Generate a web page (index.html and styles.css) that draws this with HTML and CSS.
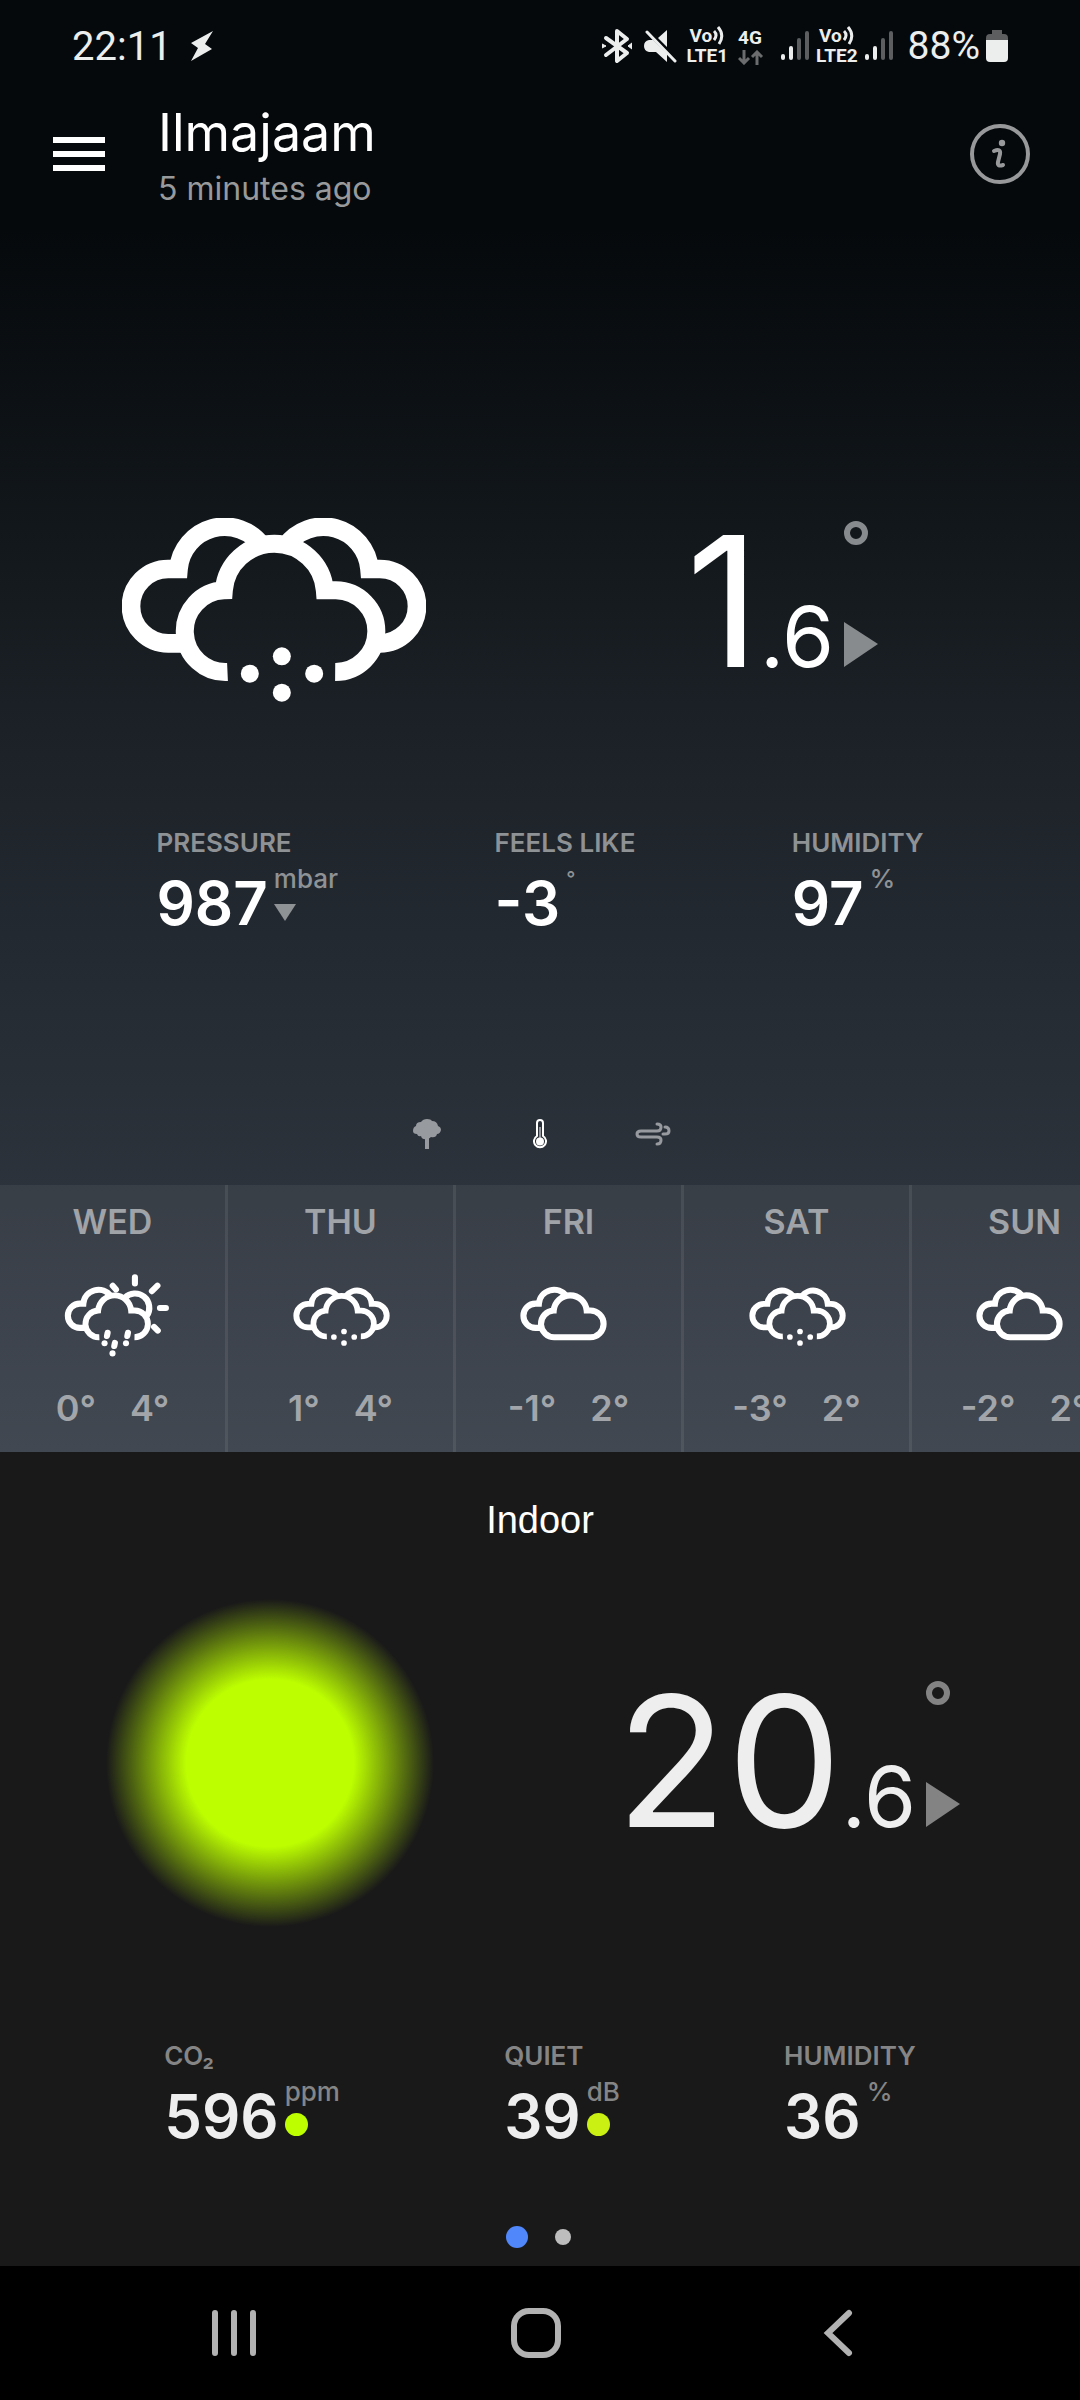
FILE: index.html
```html
<!DOCTYPE html>
<html lang="en">
<head>
<meta charset="utf-8">
<meta name="viewport" content="width=device-width, initial-scale=1">
<title>Ilmajaam</title>
<link rel="stylesheet" href="styles.css">
</head>
<body>
<svg class="defs" aria-hidden="true">
  <defs>
    <g id="back-left" fill="none" stroke="currentColor" stroke-width="56">
      <path d="M312 489H265A111.500 111.500 0 0 1 265 266H296A139 139 0 0 1 548 198"/>
    </g>
    <g id="back-right" fill="none" stroke="currentColor" stroke-width="56">
      <path d="M617 198A139 139 0 0 1 869 266H900A111.500 111.500 0 0 1 900 489"/>
    </g>
    <path id="front-open" fill="none" stroke="currentColor" stroke-width="54" d="M443 575A122.500 122.500 0 0 1 432 330A152 152 0 0 1 735 330H768A122.500 122.500 0 0 1 766 575"/>
    <path id="front-closed" fill="none" stroke="currentColor" stroke-width="56" d="M443 575A122.500 122.500 0 0 1 432 330A152 152 0 0 1 735 330H768A122.500 122.500 0 0 1 768 575Z"/>
    <g id="snow-cloud">
      <use href="#back-left"/><use href="#back-right"/><use href="#front-open"/>
      <g fill="currentColor"><circle cx="606" cy="528" r="27"/><circle cx="510" cy="580" r="27"/><circle cx="703" cy="580" r="27"/><circle cx="606" cy="637" r="27"/></g>
    </g>
  </defs>
</svg>

<div class="statusbar">
  <span class="clock">22:11</span>
  <svg class="bolt" width="24" height="32" viewBox="0 0 24 32"><path fill="#eceeee" d="M23 1L1 13L8 18L1 31L22 19L15 14Z"/></svg>
  <div class="status-icons">
    <svg width="30" height="36" viewBox="0 0 30 36" fill="none" stroke="#eceeee" stroke-width="4" stroke-linejoin="round" stroke-linecap="round"><path d="M4 10L25 25L15 33V3L25 11L4 27"/><path d="M0 16L4 18L0 20ZM30 15L26 18L30 21Z" fill="#eceeee" stroke-width="1"/></svg>
    <svg class="mute" width="33" height="34" viewBox="0 0 33 34"><path fill="#eceeee" d="M23 1V18L14 9ZM5 11H9L23 25V33L12 23H5Q0 22 0 17Q0 12 5 11Z"/><path stroke="#eceeee" stroke-width="3" stroke-linecap="round" d="M3 3L31 32"/></svg>
    <span class="volte"><span class="volte-top">Vo<svg width="11" height="19" viewBox="0 0 11 19" fill="none" stroke="#eceeee" stroke-width="3"><path d="M1 5Q5 9 1 14M5 1Q12 9 6 18"/></svg></span><span>LTE1</span></span>
    <span class="network"><span>4G</span><svg width="26" height="15" viewBox="0 0 26 15" fill="none" stroke="#6a6c6d" stroke-width="3"><path d="M6 0V13M1 8L6 13L11 8M19 15V2M14 7L19 2L24 7"/></svg></span>
    <svg class="signal" width="28" height="30" viewBox="0 0 28 30" stroke-width="4" stroke-linecap="round"><path stroke="#eceeee" d="M2 25V27M10 17V27"/><path stroke="#5c5e5f" d="M18 9V27M26 2V27"/></svg>
    <span class="volte volte-2"><span class="volte-top">Vo<svg width="11" height="19" viewBox="0 0 11 19" fill="none" stroke="#eceeee" stroke-width="3"><path d="M1 5Q5 9 1 14M5 1Q12 9 6 18"/></svg></span><span>LTE2</span></span>
    <svg class="signal-2" width="28" height="30" viewBox="0 0 28 30" stroke-width="4" stroke-linecap="round"><path stroke="#eceeee" d="M2 25V27M10 17V27"/><path stroke="#5c5e5f" d="M18 9V27M26 2V27"/></svg>
    <span class="battery-level">88%</span>
    <svg width="22" height="32" viewBox="0 0 22 32"><path fill="#5c5e5f" d="M6 0H16V4H18Q22 4 22 8V10H0V8Q0 4 4 4H6Z"/><path fill="#eceeee" d="M0 10H22V28Q22 32 18 32H4Q0 32 0 28Z"/></svg>
  </div>
</div>

<main>
<section class="outdoor">
  <header class="topbar">
    <button class="menu" aria-label="Menu"><svg width="52" height="34" viewBox="0 0 52 34" fill="#fff"><path d="M0 0H52V6H0ZM0 14H52V20H0ZM0 28H52V34H0Z"/></svg></button>
    <div class="station">
      <h1>Ilmajaam</h1>
      <p>5 minutes ago</p>
    </div>
    <button class="info" aria-label="Information"><svg width="60" height="60" viewBox="0 0 60 60" fill="none" stroke="#98999b" stroke-width="4"><circle cx="30" cy="30" r="28"/><circle cx="32" cy="19" r="3.200" fill="#98999b" stroke="none"/><path stroke-linecap="round" d="M24 27Q31 24 30 30L28 38Q27 43 33 41"/></svg></button>
  </header>

  <div class="hero">
    <svg class="now-icon" width="304" height="184" viewBox="127 113 911 552"><use href="#snow-cloud"/></svg>
    <div class="temp">
      <span class="whole">1</span><span class="fraction">.6</span>
      <span class="trend"><span class="ring"></span><svg width="34" height="45" viewBox="0 0 34 45"><path fill="currentColor" d="M0 0L34 22L0 45Z"/></svg></span>
    </div>
  </div>

  <dl class="metrics">
    <div><dt>PRESSURE</dt><dd><span class="value">987</span><span class="unit">mbar<svg class="down" width="22" height="17" viewBox="0 0 22 17"><path fill="currentColor" d="M0 0H22L11 17Z"/></svg></span></dd></div>
    <div><dt>FEELS LIKE</dt><dd><span class="value">-3</span><span class="unit degree">°</span></dd></div>
    <div><dt>HUMIDITY</dt><dd><span class="value">97</span><span class="unit">%</span></dd></div>
  </dl>

  <nav class="modules" aria-label="Modules">
    <button aria-label="Outdoor"><svg width="28" height="30" viewBox="0 0 28 30" fill="#979a9f"><path d="M3 7Q3 3 8 3Q10 0 14 0Q18 0 19 2Q24 2 25 7Q28 8 28 11Q27 15 24 15Q23 19 18 18Q16 20 14 20Q9 21 8 17Q5 18 4 15Q0 15 0 12Q0 8 3 7Z"/><path d="M12 18H16V30H12Z"/></svg></button>
    <button aria-label="Temperature"><svg width="14" height="30" viewBox="0 0 14 30" fill="none" stroke="#fff" stroke-width="2"><path d="M4 17V4A3 3 0 0 1 10 4V17A6 6 0 1 1 4 17Z"/><circle cx="7" cy="22.500" r="3" fill="#fff"/><path d="M7 8V22" stroke-width="1"/></svg></button>
    <button aria-label="Wind"><svg width="36" height="24" viewBox="0 0 36 24" fill="none" stroke="#979a9f" stroke-width="3" stroke-linecap="round"><path d="M22 2Q26 2 26 5Q26 9 22 9H6Q2 9 2 12Q2 15 6 15H22Q26 15 26 18Q26 22 22 22"/><path d="M30 5Q34 5 34 9Q34 12 30 12H28"/></svg></button>
  </nav>

  <ol class="forecast">
    <li><h2>WED</h2>
      <svg width="112" height="83" viewBox="54 -6 1029 763"><use href="#back-left"/><use href="#front-open"/>
        <g fill="none" stroke="currentColor" stroke-width="56"><path d="M677 213A131 131 0 0 1 880 377"/><path stroke-linecap="round" d="M770 24V82M566 102L596 136M977 101L926 152M1000 306H1055M946 480L980 514M519 535L513 564M706 535L700 564M586 627L580 656"/></g>
        <g fill="currentColor"><circle cx="491" cy="631" r="28"/><circle cx="688" cy="631" r="28"/><circle cx="564" cy="724" r="28"/></g></svg>
      <p><span>0°</span><span>4°</span></p></li>
    <li><h2>THU</h2>
      <svg width="112" height="83" viewBox="46 -18 1063 788"><use href="#snow-cloud"/></svg>
      <p><span>1°</span><span>4°</span></p></li>
    <li><h2>FRI</h2>
      <svg width="112" height="83" viewBox="58 -6 1029 763"><use href="#back-left"/><use href="#front-closed"/></svg>
      <p><span>-1°</span><span>2°</span></p></li>
    <li><h2>SAT</h2>
      <svg width="112" height="83" viewBox="46 -18 1063 788"><use href="#snow-cloud"/></svg>
      <p><span>-3°</span><span>2°</span></p></li>
    <li><h2>SUN</h2>
      <svg width="112" height="83" viewBox="58 -6 1029 763"><use href="#back-left"/><use href="#front-closed"/></svg>
      <p><span>-2°</span><span>2°</span></p></li>
  </ol>
</section>

<section class="indoor">
  <h2 class="room">Indoor</h2>
  <div class="hero">
    <div class="orb"></div>
    <div class="temp">
      <span class="whole">20</span><span class="fraction">.6</span>
      <span class="trend"><span class="ring"></span><svg width="34" height="45" viewBox="0 0 34 45"><path fill="currentColor" d="M0 0L34 22L0 45Z"/></svg></span>
    </div>
  </div>
  <dl class="metrics">
    <div><dt>CO₂</dt><dd><span class="value">596</span><span class="unit">ppm<i class="level good"></i></span></dd></div>
    <div><dt>QUIET</dt><dd><span class="value">39</span><span class="unit">dB<i class="level fair"></i></span></dd></div>
    <div><dt>HUMIDITY</dt><dd><span class="value">36</span><span class="unit">%</span></dd></div>
  </dl>
  <div class="pages">
    <button class="page current" aria-label="Page 1"></button>
    <button class="page" aria-label="Page 2"></button>
  </div>
</section>
</main>

<nav class="system-nav" aria-label="System">
  <button aria-label="Recents"><svg width="48" height="50" viewBox="0 0 48 50" stroke="#b2b2b2" stroke-width="6" stroke-linecap="round"><path d="M5 5V45M24 5V45M43 5V45"/></svg></button>
  <button aria-label="Home"><svg width="50" height="50" viewBox="0 0 50 50" fill="none" stroke="#b2b2b2" stroke-width="6"><rect x="3" y="3" width="44" height="44" rx="15"/></svg></button>
  <button aria-label="Back"><svg width="30" height="50" viewBox="0 0 30 50" fill="none" stroke="#b2b2b2" stroke-width="6" stroke-linecap="round"><path d="M26 5L5 25L26 45"/></svg></button>
</nav>
</body>
</html>
```
FILE: styles.css
```css
* { box-sizing: border-box; margin: 0; padding: 0; }

body {
  background: #000;
  color: #fff;
  font-family: Inter, "Open Sans", sans-serif;
}

button { display: flex; border: 0; background: none; color: inherit; cursor: pointer; }
svg { display: block; flex: none; }
.defs { position: absolute; width: 0; height: 0; }

/* Status bar */
.statusbar {
  display: flex;
  align-items: center;
  height: 92px;
  padding: 0 72px;
  background: #05090c;
  color: #eceeee;
  font-family: Roboto, sans-serif;
}
.clock { font-size: 40px; }
.bolt { margin-left: 18px; }
.status-icons { display: flex; align-items: center; margin-left: auto; }
.mute { margin-left: 12px; }
.volte, .network {
  display: flex;
  flex-direction: column;
  font-size: 19px;
  font-weight: 700;
  line-height: 20px;
}
.volte { margin-left: 10px; }
.volte-top { display: flex; gap: 1px; padding-left: 3px; }
.network { margin-left: 10px; gap: 2px; }
.signal { margin-left: 17px; }
.volte-2 { margin-left: 7px; }
.signal-2 { margin-left: 7px; }
.battery-level { margin: 0 6px 0 15px; font-size: 39px; }

/* Outdoor */
.outdoor { background: linear-gradient(#05090c 0, #05090c 10%, #12171b 32%, #1b2026 45%, #22282f 60%, #363d47 100%); }
.topbar { display: flex; align-items: center; height: 124px; padding: 0 50px 0 53px; }
.station { margin: 0 auto 0 53px; padding-top: 3px; }
.station h1 { font-size: 52px; font-weight: 400; line-height: 66px; }
.station p { color: #98999b; font-size: 32px; line-height: 46px; }

.hero { display: grid; grid-template-columns: 1fr 1fr; }
.outdoor .hero { height: 200px; margin-top: 294px; }
.now-icon { place-self: center; margin-left: 8px; }
.temp { display: flex; align-items: baseline; justify-content: center; padding-right: 44px; }
.outdoor .temp { padding-right: 56px; }
.whole { font-size: 182px; line-height: 182px; }
.fraction { font-size: 84px; line-height: 84px; }
.trend {
  display: flex;
  flex-direction: column;
  align-self: flex-start;
  justify-content: space-between;
  height: 157px;
  margin-left: 10px;
  padding-top: 11px;
  color: #888b8e;
}
.ring { width: 24px; height: 24px; border: 6px solid; border-radius: 50%; }

.metrics { display: flex; justify-content: space-evenly; color: #8f9295; }
.outdoor .metrics { margin-top: 115px; }
.metrics dt { font-size: 26px; font-weight: 600; line-height: 36px; }
.metrics dd { display: flex; }
.value { color: #fff; font-size: 60px; font-weight: 600; line-height: 84px; }
.unit { margin-left: 6px; font-size: 26px; font-weight: 500; line-height: 36px; }
.down { margin-top: 7px; }
.degree { font-size: 20px; }

.modules { display: flex; align-items: center; justify-content: center; height: 30px; margin-top: 174px; }
.modules button { justify-content: center; width: 113px; }

.forecast {
  display: flex;
  margin-top: 36px;
  overflow: hidden;
  background: rgba(255, 255, 255, 0.06);
  list-style: none;
}
.forecast li {
  display: flex;
  flex: 0 0 228px;
  flex-direction: column;
  align-items: center;
  padding: 15px 0 20px;
  border-right: 3px solid rgba(255, 255, 255, 0.08);
}
.forecast h2 { color: #a0a3a8; font-size: 34px; font-weight: 600; line-height: 44px; }
.forecast svg { margin: 30px 0 27px; }
.forecast p { display: flex; gap: 34px; color: #a2a5a9; font-size: 36px; font-weight: 600; line-height: 48px; }

/* Indoor */
.indoor { padding: 44px 0 18px; background: #191919; }
.room { font: 400 38px/48px "Liberation Sans", sans-serif; text-align: center; }
.indoor .hero { align-items: center; margin-top: 55px; }
.orb {
  justify-self: center;
  width: 328px;
  height: 328px;
  border-radius: 50%;
  background: radial-gradient(closest-side, #bdff00 51%, rgba(189, 255, 0, 0) 100%);
}
.indoor .temp { padding-bottom: 5px; }
.indoor .temp, .indoor .value { color: #eee; }
.indoor .trend { color: #838383; }
.indoor .metrics { margin-top: 111px; color: #858585; }
.level { display: block; width: 23px; height: 23px; margin-top: 3px; border-radius: 50%; }
.good { background: #bdff00; }
.fair { background: #c9f012; }

.pages { display: flex; align-items: center; justify-content: center; gap: 27px; height: 22px; margin-top: 68px; padding-right: 4px; }
.page { width: 16px; height: 16px; border-radius: 50%; background: #bdbdbd; }
.current { width: 22px; height: 22px; background: #5087fb; }

.system-nav { display: flex; align-items: center; justify-content: center; height: 134px; padding-right: 8px; background: #000; }
.system-nav button { flex: 0 1 302px; justify-content: center; }
```
